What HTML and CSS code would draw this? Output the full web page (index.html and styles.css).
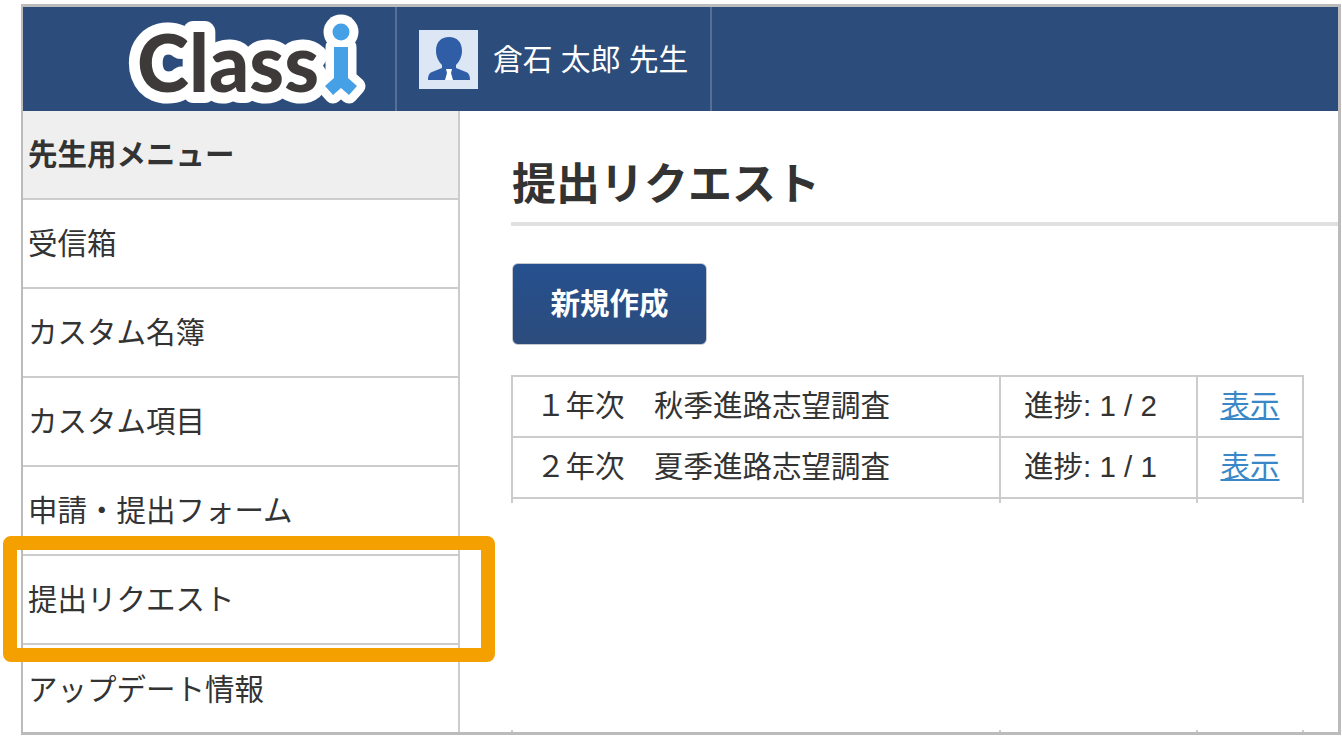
FILE: index.html
```html
<!DOCTYPE html>
<html lang="ja">
<head>
<meta charset="utf-8">
<title>提出リクエスト</title>
<link rel="stylesheet" href="styles.css">
</head>
<body>
<div class="frame">
  <header class="header">
    <div class="logo-cell">
      <svg class="logo" width="250" height="104" viewBox="0 -3 250 104" xmlns="http://www.w3.org/2000/svg">
        <text class="logo-outline" x="18" y="82" textLength="182" lengthAdjust="spacingAndGlyphs">Class</text>
        <circle cx="222" cy="22" r="17.5" fill="#fff"/>
        <path d="M215 37H229V68L238 76 230 85 222 78 214 85 206 76 215 68Z" fill="#fff" stroke="#fff" stroke-width="17" stroke-linejoin="round"/>
        <text class="logo-text" x="18" y="82" textLength="182" lengthAdjust="spacingAndGlyphs">Class</text>
        <circle cx="222" cy="22" r="8.5" fill="#46a0e6"/>
        <path d="M215 37H229V68L238 76 230 85 222 78 214 85 206 76 215 68Z" fill="#46a0e6"/>
      </svg>
    </div>
    <div class="user-cell">
      <svg class="avatar" width="59" height="59" viewBox="0 0 59 59" xmlns="http://www.w3.org/2000/svg">
        <rect width="59" height="59" fill="#dce6f4"/>
        <path d="M30 7C38 7 43 12 43 21 43 27 40 32 37 35V38L47 42C50 43 51 46 51 50H9C9 46 10 43 13 42L23 38V35C20 32 17 27 17 21 17 12 22 7 30 7Z" fill="#2f5ea6"/>
        <path d="M27 39H33L32 43 34 50H26L28 43Z" fill="#fff"/>
      </svg>
      <span class="user-name">倉石 太郎 先生</span>
    </div>
  </header>
  <div class="body">
    <nav class="sidebar">
      <div class="nav-head">先生用メニュー</div>
      <a class="nav-item">受信箱</a>
      <a class="nav-item">カスタム名簿</a>
      <a class="nav-item">カスタム項目</a>
      <a class="nav-item">申請・提出フォーム</a>
      <a class="nav-item">提出リクエスト</a>
      <a class="nav-item">アップデート情報</a>
    </nav>
    <main class="main">
      <h1 class="title">提出リクエスト</h1>
      <button class="btn">新規作成</button>
      <table class="list">
        <colgroup><col class="c1"><col class="c2"><col class="c3"></colgroup>
        <tr>
          <td class="name">１年次　秋季進路志望調査</td>
          <td class="prog">進捗: 1 / 2</td>
          <td class="act"><a href="#">表示</a></td>
        </tr>
        <tr>
          <td class="name">２年次　夏季進路志望調査</td>
          <td class="prog">進捗: 1 / 1</td>
          <td class="act"><a href="#">表示</a></td>
        </tr>
        <tr class="stub"><td></td><td></td><td></td></tr>
      </table>
      <table class="list next">
        <colgroup><col class="c1"><col class="c2"><col class="c3"></colgroup>
        <tr class="stub"><td></td><td></td><td></td></tr>
      </table>
    </main>
  </div>
</div>
<div class="callout"></div>
</body>
</html>
```

FILE: styles.css
```css
* { box-sizing: border-box; }
html, body { margin: 0; padding: 0; background: #fff; overflow: hidden; }
body {
  width: 1342px;
  height: 737px;
  padding: 4px 1px 0 21px;
  font-family: "Liberation Sans", "Noto Sans CJK JP", sans-serif;
  font-size: 29.5px;
  color: #333;
  position: relative;
}
.frame {
  width: 1320px;
  height: 731px;
  border: 3px solid #bbb;
  border-left-width: 2px;
  border-bottom-width: 3px;
  overflow: hidden;
  display: flex;
  flex-direction: column;
}
.header {
  flex: none;
  height: 104px;
  background: #2c4c7c;
  display: flex;
}
.logo-cell {
  width: 374px;
  border-right: 2px solid #566f94;
  display: flex;
  justify-content: flex-end;
  align-items: flex-start;
  padding: 0 26px 0 0;
}
.logo { display: block; }
.logo-text, .logo-outline {
  font-family: "Lato", "Liberation Sans", sans-serif;
  font-weight: 900;
  font-size: 80px;
}
.logo-text { fill: #3e3a39; }
.logo-outline { fill: #fff; stroke: #fff; stroke-width: 22px; stroke-linejoin: round; }
.user-cell {
  width: 315px;
  border-right: 2px solid #566f94;
  display: flex;
  align-items: center;
  padding-left: 22px;
  gap: 15px;
}
.avatar { flex: none; display: block; }
.user-name { color: #fff; font-size: 29.8px; padding-bottom: 5px; }
.body { flex: 1; display: flex; min-height: 0; }
.sidebar {
  flex: none;
  width: 437px;
  border-right: 2px solid #ccc;
  display: flex;
  flex-direction: column;
}
.nav-head, .nav-item {
  flex: none;
  height: 89px;
  display: flex;
  align-items: center;
  padding: 0 0 6px 5px;
  border-bottom: 2px solid #ccc;
}
.nav-head { font-weight: 700; background: #efefef; }
.nav-item:last-child { border-bottom: 0; }
.main { flex: 1; min-width: 0; padding-left: 51px; }
.title {
  margin: 0;
  padding: 48px 0 0 1px;
  font-size: 44px;
  line-height: 52px;
  font-weight: 700;
  border-bottom: 4px solid #e0e0e0;
  height: 115px;
}
.btn {
  display: block;
  margin: 37px 0 30px 1px;
  width: 195px;
  height: 82px;
  padding: 0 0 6px;
  border: 1px solid #c4c8cf;
  border-radius: 6px;
  background: linear-gradient(#26508f, #2c4c7c);
  color: #fff;
  font: 700 29.5px "Liberation Sans", "Noto Sans CJK JP", sans-serif;
}
.list {
  width: 793px;
  table-layout: fixed;
  border-collapse: separate;
  border-spacing: 0;
  border-top: 2px solid #ccc;
  border-left: 2px solid #ccc;
}
.c1 { width: 488px; }
.c2 { width: 197px; }
.c3 { width: 106px; }
.list td {
  height: 61px;
  padding: 0 0 8px;
  border-right: 2px solid #ccc;
  border-bottom: 2px solid #ccc;
}
.list .stub td { height: 4px; padding: 0; border-bottom: 0; }
.list .name { padding-left: 23px; }
.list .prog { padding-left: 23px; }
.list .act { text-align: center; }
.list a { color: #3a87c8; text-decoration: underline; }
.next { margin-top: 227px; border-top: 0; }
.callout {
  position: absolute;
  left: 3px;
  top: 536px;
  width: 492px;
  height: 126px;
  border: 14px solid #f4a000;
  border-radius: 8px;
}
```
